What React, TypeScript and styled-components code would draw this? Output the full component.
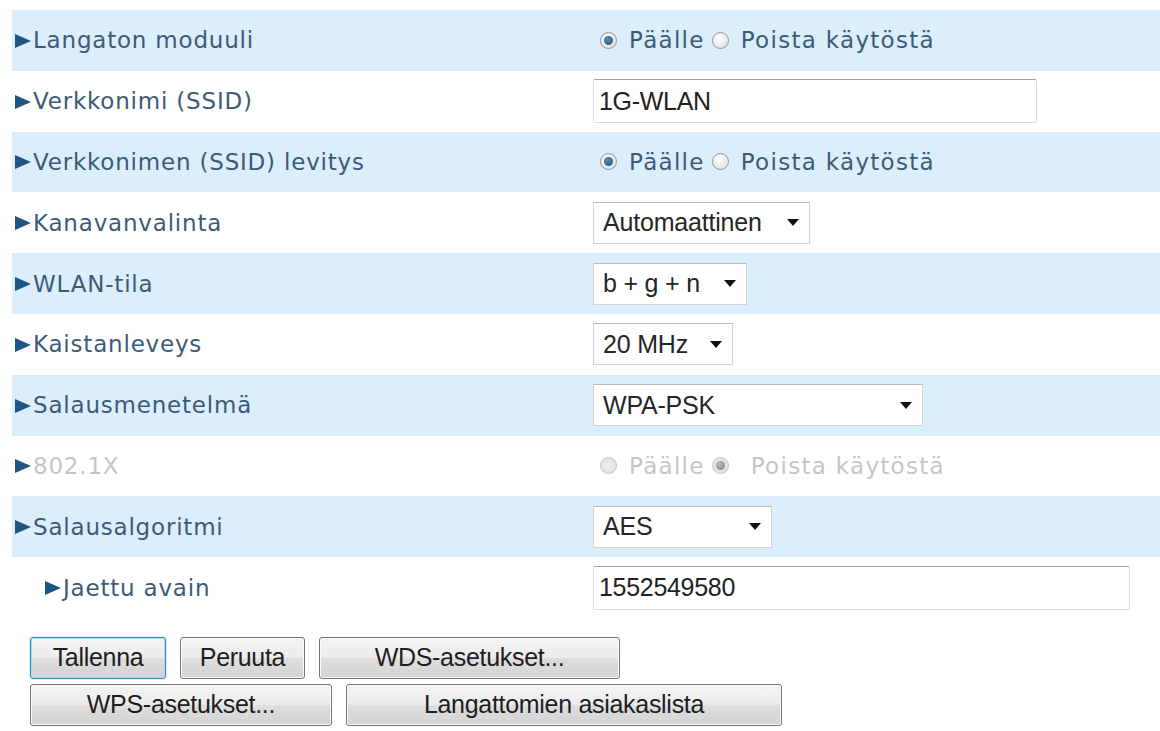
import React from "react";
import styled, { createGlobalStyle, css } from "styled-components";

const GlobalStyle = createGlobalStyle`
    html, body {
        margin: 0;
        padding: 0;
        background: #ffffff;
    }
    body {
        font-family: "DejaVu Sans", Verdana, sans-serif;
    }
`;

type RowKind = "radio" | "input" | "select" | "disabledRadio";

interface RowDef {
    label: string;
    kind: RowKind;
    value?: string;
    width?: number;
    indent?: boolean;
    on?: boolean;
}

const ROWS: RowDef[] = [
    { label: "Langaton moduuli", kind: "radio", on: true },
    { label: "Verkkonimi (SSID)", kind: "input", value: "1G-WLAN", width: 444 },
    { label: "Verkkonimen (SSID) levitys", kind: "radio", on: true },
    { label: "Kanavanvalinta", kind: "select", value: "Automaattinen", width: 217 },
    { label: "WLAN-tila", kind: "select", value: "b + g + n", width: 154 },
    { label: "Kaistanleveys", kind: "select", value: "20 MHz", width: 140 },
    { label: "Salausmenetelmä", kind: "select", value: "WPA-PSK", width: 330 },
    { label: "802.1X", kind: "disabledRadio", on: false },
    { label: "Salausalgoritmi", kind: "select", value: "AES", width: 179 },
    { label: "Jaettu avain", kind: "input", value: "1552549580", width: 537, indent: true },
];

const App: React.FC = () => {
    return (
        <>
            <GlobalStyle />
            <Style.Page>
                <Style.Table>
                    {ROWS.map((row, i) => (
                        <Style.Row key={row.label} $shaded={i % 2 === 0}>
                            <Style.Label $indent={!!row.indent} $disabled={row.kind === "disabledRadio"}>
                                <Style.Arrow />
                                {row.label}
                            </Style.Label>
                            <Style.Control>
                                <Field row={row} />
                            </Style.Control>
                        </Style.Row>
                    ))}
                </Style.Table>

                <Style.Buttons>
                    <Style.ButtonRow>
                        <Style.Button $w={136} $focused>
                            Tallenna
                        </Style.Button>
                        <Style.Button $w={125}>Peruuta</Style.Button>
                        <Style.Button $w={301}>WDS-asetukset...</Style.Button>
                    </Style.ButtonRow>
                    <Style.ButtonRow>
                        <Style.Button $w={302}>WPS-asetukset...</Style.Button>
                        <Style.Button $w={436}>Langattomien asiakaslista</Style.Button>
                    </Style.ButtonRow>
                </Style.Buttons>
            </Style.Page>
        </>
    );
};

export default App;

const Field: React.FC<{ row: RowDef }> = ({ row }) => {
    if (row.kind === "input") {
        return <Style.TextInput $w={row.width || 200} defaultValue={row.value} readOnly />;
    }
    if (row.kind === "select") {
        return (
            <Style.Select $w={row.width || 200}>
                <span>{row.value}</span>
                <Style.Caret />
            </Style.Select>
        );
    }
    const disabled = row.kind === "disabledRadio";
    return (
        <Style.RadioGroup $disabled={disabled}>
            <Style.Radio $checked={!!row.on} $disabled={disabled} />
            <Style.OptionText>Päälle</Style.OptionText>
            <Style.Radio $checked={!row.on} $disabled={disabled} $wide={disabled} />
            <Style.OptionText>Poista käytöstä</Style.OptionText>
        </Style.RadioGroup>
    );
};

const Style = {
    Page: styled.div`
        padding: 10px 0 0 12px;
    `,

    Table: styled.div`
        display: flex;
        flex-direction: column;
    `,

    Row: styled.div<{ $shaded: boolean }>`
        display: grid;
        grid-template-columns: 581px 1fr;
        align-items: center;
        height: 60.8px;
        background: ${(p) => (p.$shaded ? "#dbeefb" : "#ffffff")};
    `,

    Label: styled.div<{ $indent: boolean; $disabled: boolean }>`
        display: flex;
        align-items: center;
        padding-left: ${(p) => (p.$indent ? 33 : 3)}px;
        font-size: 23px;
        letter-spacing: 0.8px;
        color: ${(p) => (p.$disabled ? "#c3c6c9" : "#3b5b78")};
        white-space: nowrap;
    `,

    Arrow: styled.span`
        display: inline-block;
        width: 0;
        height: 0;
        border-left: 16px solid #1f5583;
        border-top: 7px solid transparent;
        border-bottom: 7px solid transparent;
        margin-right: 2px;
        margin-top: 1px;
    `,

    Control: styled.div`
        display: flex;
        align-items: center;
    `,

    TextInput: styled.input<{ $w: number }>`
        box-sizing: border-box;
        width: ${(p) => p.$w}px;
        height: 44px;
        padding: 0 5px;
        border: 1px solid #dadada;
        border-top-color: #a3a3a3;
        border-radius: 2px;
        background: #ffffff;
        font-family: "Liberation Sans", Arial, sans-serif;
        font-size: 25px;
        letter-spacing: -0.3px;
        color: #222222;
        outline: none;
    `,

    Select: styled.div<{ $w: number }>`
        box-sizing: border-box;
        width: ${(p) => p.$w}px;
        height: 42px;
        display: flex;
        align-items: center;
        justify-content: space-between;
        padding: 0 10px 0 9px;
        border: 1px solid #d4d4d4;
        border-top-color: #b9b9b9;
        background: #ffffff;
        font-family: "Liberation Sans", Arial, sans-serif;
        font-size: 25px;
        letter-spacing: -0.2px;
        color: #262626;
    `,

    Caret: styled.span`
        width: 0;
        height: 0;
        border-top: 7px solid #111111;
        border-left: 6.5px solid transparent;
        border-right: 6.5px solid transparent;
    `,

    RadioGroup: styled.div<{ $disabled: boolean }>`
        display: flex;
        align-items: center;
        padding-left: 7px;
        font-size: 23px;
        letter-spacing: 1.3px;
        color: ${(p) => (p.$disabled ? "#c3c6c9" : "#3b5b78")};
    `,

    Radio: styled.span<{ $checked: boolean; $disabled: boolean; $wide?: boolean }>`
        position: relative;
        box-sizing: border-box;
        width: 17px;
        height: 17px;
        border-radius: 50%;
        border: 1px solid ${(p) => (p.$disabled ? "#c4c4c4" : "#8f9499")};
        background: ${(p) =>
            p.$disabled ? "radial-gradient(circle, #f0f0f0, #dedede)" : "radial-gradient(circle at 40% 35%, #ffffff, #d8dadc)"};
        margin-right: ${(p) => (p.$wide ? 22 : 12)}px;
        flex: none;

        ${(p) =>
            p.$checked &&
            css`
                &::after {
                    content: "";
                    position: absolute;
                    left: 3px;
                    top: 3px;
                    width: 9px;
                    height: 9px;
                    border-radius: 50%;
                    background: ${p.$disabled
                        ? "radial-gradient(circle at 40% 35%, #bdbdbd, #7d7d7d)"
                        : "radial-gradient(circle at 40% 35%, #5c8fb4, #1c4c6e)"};
                }
            `}
    `,

    OptionText: styled.span`
        margin-right: 7px;
        white-space: nowrap;
    `,

    Buttons: styled.div`
        display: flex;
        flex-direction: column;
        gap: 5px;
        padding: 19px 0 0 18px;
    `,

    ButtonRow: styled.div`
        display: flex;
        gap: 14px;
    `,

    Button: styled.button<{ $w: number; $focused?: boolean }>`
        box-sizing: border-box;
        width: ${(p) => p.$w}px;
        height: 42px;
        padding: 0;
        border: 1px solid ${(p) => (p.$focused ? "#3c86b8" : "#747474")};
        border-radius: 3px;
        background: linear-gradient(#f4f4f4 0%, #ececec 48%, #dedede 52%, #d2d2d2 100%);
        box-shadow: ${(p) =>
            p.$focused ? "inset 0 0 0 1px #a9dbf3, 0 0 2px #8cc6e8" : "inset 0 0 0 1px #fbfbfb"};
        font-family: "Liberation Sans", Arial, sans-serif;
        font-size: 25px;
        letter-spacing: -0.3px;
        color: #1e1e1e;
        text-align: center;
    `,
};
